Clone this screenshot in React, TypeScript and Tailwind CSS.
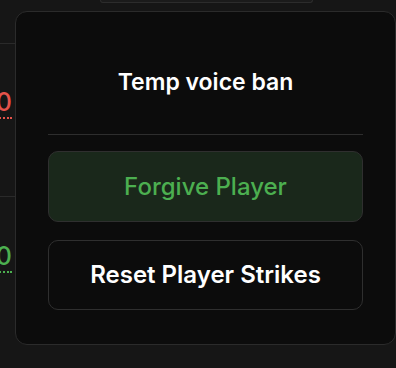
import React from 'react'

export default function App() {
  return (
    <div
      className="relative w-[396px] h-[368px] overflow-hidden bg-[#161616] text-white"
      style={{ fontFamily: 'Inter, "Noto Sans", sans-serif' }}
    >
      {/* table behind the popup */}
      <div className="flex flex-col">
        <div className="h-[3px] flex justify-start">
          <div className="ml-[100px] w-[213px] h-[3px] rounded-b-lg border-b border-x border-[#2c2c2c] bg-[#1b1b1b]" />
        </div>
        <div className="h-[41px] border-b border-[#2a2a2a] w-[15px]" />
        <div className="h-[153px] border-b border-[#2a2a2a] w-[15px] flex items-start justify-end pt-[44px] pr-[3px] overflow-hidden">
          <span className="text-[25px] leading-[28px] font-medium text-[#e5534b] border-b-2 border-dotted border-[#e5534b] pb-[1px]">0</span>
        </div>
        <div className="w-[15px] flex items-start justify-end pt-[45px] pr-[3px] overflow-hidden">
          <span className="text-[25px] leading-[28px] font-medium text-[#4cb050] border-b-2 border-dotted border-[#4cb050] pb-[1px]">0</span>
        </div>
      </div>

      {/* popup */}
      <div className="absolute left-[15px] top-[11px] w-[381px] h-[334px] rounded-xl border border-[#2b2b2b] bg-[#0c0c0c] px-8 pt-[56px] flex flex-col">
        <div className="text-center text-[23px] leading-7 font-semibold">Temp voice ban</div>
        <div className="mt-[38px] h-px bg-[#2e2e2e]" />
        <button className="mt-[16px] h-[71px] rounded-[10px] border border-[#2f2f2f] bg-[#1a281b] text-[24px] font-medium text-[#4caf50]">
          Forgive Player
        </button>
        <button className="mt-[18px] h-[70px] rounded-[10px] border border-[#2f2f2f] bg-transparent text-[24px] font-semibold text-white">
          Reset Player Strikes
        </button>
      </div>
    </div>
  )
}
